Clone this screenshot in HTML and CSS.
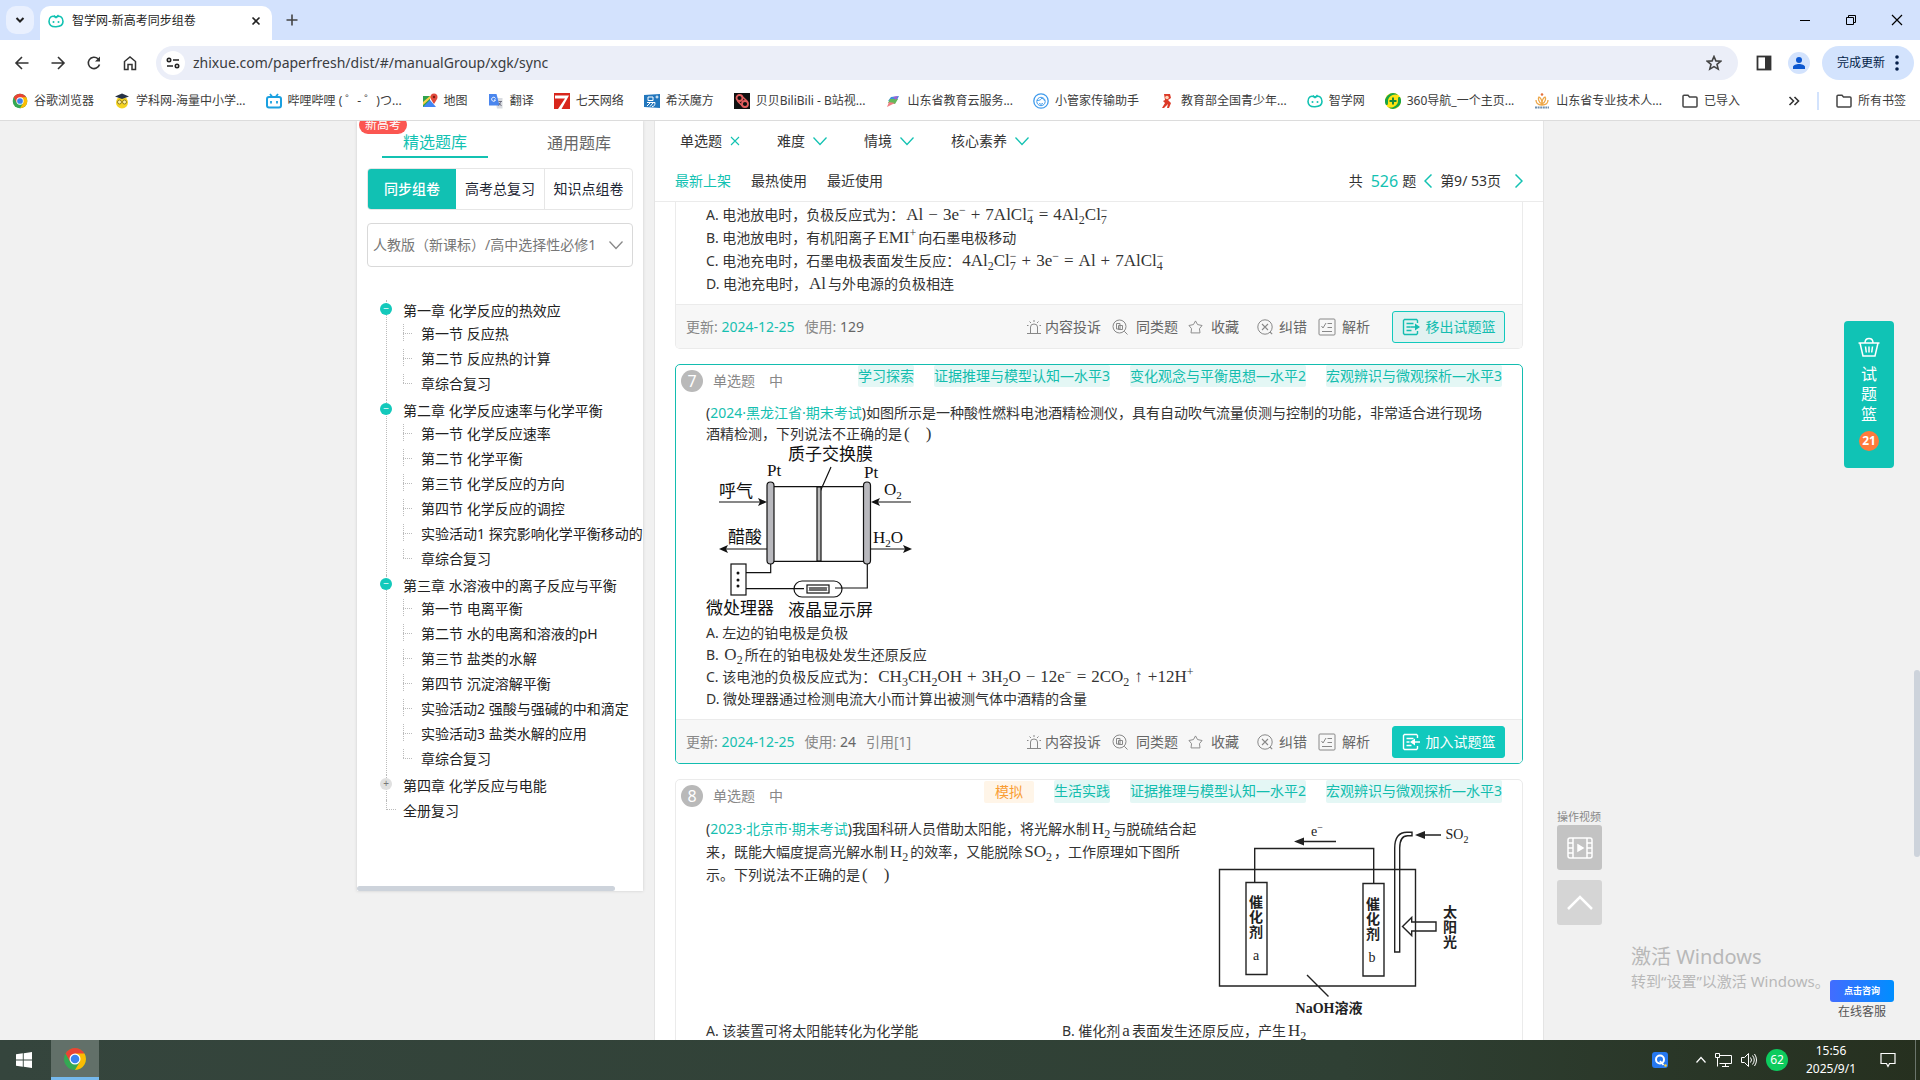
FILE: index.html
```html
<!DOCTYPE html>
<html lang="zh-CN">
<head>
<meta charset="utf-8">
<title>智学网-新高考同步组卷</title>
<link rel="stylesheet" href="styles.css">
</head>
<body>
<svg class="defs" aria-hidden="true">
  <defs>
    <symbol id="owl" viewBox="0 0 16 16"><path d="M8 4.500C4 1.500 .8 4.500 1 8.500S4 14 8 13.800s7-1.300 7-5.300-3-7-7-4z" fill="none" stroke="#13c2b2" stroke-width="1.600"/><path d="M8 4.500 10.500 2M8 4.500 6 2.500" stroke="#13c2b2" stroke-width="1.400"/><circle cx="5.500" cy="9" r="1" fill="#13c2b2"/><circle cx="10.500" cy="9" r="1" fill="#13c2b2"/></symbol>
    <symbol id="chrome" viewBox="0 0 24 24"><circle cx="12" cy="12" r="11" fill="#34a853"/><path d="M12 12 2.500 6.500A11 11 0 0 1 21.500 6.500z" fill="#ea4335"/><path d="M12 6.500h9.500A11 11 0 0 1 12 23l5-8.500z" fill="#fbbc04"/><path d="M2.500 6.500 7.200 14.700 12 6.500z" fill="#ea4335"/><circle cx="12" cy="12" r="5.500" fill="#fff"/><circle cx="12" cy="12" r="4.300" fill="#3b82f0"/></symbol>
    <symbol id="folder" viewBox="0 0 16 16"><path d="M1 3.200c0-.6.400-1 1-1h4L7.500 4H14c.6 0 1 .4 1 1v8c0 .6-.4 1-1 1H2c-.6 0-1-.4-1-1z" fill="none" stroke="#444" stroke-width="1.500"/></symbol>
    <symbol id="down" viewBox="0 0 14 14"><path d="M.5 3.500 7 10.500 13.500 3.500" fill="none" stroke="currentColor" stroke-width="1.300"/></symbol>
    <symbol id="siren" viewBox="0 0 14 16"><path d="M0 14.500h14M3.500 14V8a3.500 3 0 0 1 7 0v6M7 1v2M2.500 2.500 4 4M11.500 2.500 10 4M0 6.500h1.500M12.500 6.500H14" fill="none" stroke="currentColor"/></symbol>
    <symbol id="same" viewBox="0 0 16 16"><circle cx="7.500" cy="7.500" r="6.500" fill="none" stroke="currentColor"/><path d="M12.300 12.300 15.500 15.500M4.500 4.500h3.500v5.500H4.500zM6.500 6.500h4v4h-4z" fill="none" stroke="currentColor"/></symbol>
    <symbol id="star" viewBox="0 0 16 16"><path d="m8 1.500 2.200 3.900 4.800 1-2.800 3.400.6 4.500H3.200l.6-4.500L1 6.400l4.800-1z" fill="none" stroke="currentColor" stroke-linejoin="round"/></symbol>
    <symbol id="wrong" viewBox="0 0 16 16"><circle cx="8" cy="8" r="7.200" fill="none" stroke="currentColor"/><path d="m5 5 6 6M11 5l-6 6M13 13l2.200 2.200" stroke="currentColor" stroke-width="1.100"/></symbol>
    <symbol id="parse" viewBox="0 0 18 18"><rect x="1" y="1" width="16" height="16" rx="1" fill="none" stroke="currentColor"/><path d="m3.500 8 1.500 2 3-5M9.500 5.500H14M9.500 9.500H14M4 13.500h10" fill="none" stroke="currentColor"/></symbol>
    <symbol id="out" viewBox="0 0 18 18"><path d="M15.500 5V2.500l-1-1H2.500l-1 1v13l1 1h12l1-1V13M4.500 5.500h7M4.500 9h4M4.500 12.500h5" fill="none" stroke="currentColor" stroke-width="1.400"/><path d="M8.500 9h8" stroke="currentColor" stroke-width="1.600"/><path d="m13 5.500 5 3.500-5 3.500z" fill="currentColor"/></symbol>
    <symbol id="in" viewBox="0 0 18 18"><path d="M15.500 5V2.500l-1-1H2.500l-1 1v13l1 1h12l1-1V13M4.500 5.500h7M4.500 9h3M4.500 12.500h5" fill="none" stroke="currentColor" stroke-width="1.400"/><path d="M11 9h7" stroke="currentColor" stroke-width="1.600"/><path d="m13 5.500-5 3.500 5 3.500z" fill="currentColor"/></symbol>
  </defs>
</svg>

<header class="browser">
  <div class="tabstrip">
    <button class="tabsearch" aria-label="搜索标签页"><svg width="10" height="8" viewBox="0 0 10 8"><path d="m1.500 2 3.500 3.500L8.500 2" fill="none" stroke="#222" stroke-width="2"/></svg></button>
    <div class="tab"><svg width="16" height="16"><use href="#owl"/></svg><span class="tab-title">智学网-新高考同步组卷</span><button aria-label="关闭"><svg width="10" height="10" viewBox="0 0 10 10"><path d="m1.500 1.500 7 7m0-7-7 7" stroke="#222" stroke-width="1.600"/></svg></button></div>
    <button class="newtab" aria-label="新标签页"><svg width="12" height="12" viewBox="0 0 12 12"><path d="M6 .5v11M.5 6h11" stroke="#444" stroke-width="1.600"/></svg></button>
    <div class="winbtns">
      <button aria-label="最小化"><svg width="12" height="12"><path d="M1 6.500h10" stroke="#000"/></svg></button>
      <button aria-label="还原"><svg width="12" height="12"><path d="M1.500 3.500h7v7h-7zM3.500 3V1.500h7v7H9" fill="none" stroke="#000"/></svg></button>
      <button aria-label="关闭窗口"><svg width="12" height="12"><path d="m1 1 10 10m0-10L1 11" stroke="#000" stroke-width="1.200"/></svg></button>
    </div>
  </div>
  <div class="toolbar">
    <button aria-label="后退"><svg width="16" height="16" viewBox="0 0 16 16"><path d="M14.500 8H2.500M8 2 2 8l6 6" fill="none" stroke="#333" stroke-width="1.600"/></svg></button>
    <button aria-label="前进"><svg width="16" height="16" viewBox="0 0 16 16"><path d="M1.500 8h12M8 2l6 6-6 6" fill="none" stroke="#333" stroke-width="1.600"/></svg></button>
    <button aria-label="刷新"><svg width="16" height="16" viewBox="0 0 16 16"><path d="M13.500 9.500A5.700 5.700 0 1 1 12 3.800l1.500 1.500" fill="none" stroke="#333" stroke-width="1.600"/><path d="M14 1.500v5H9z" fill="#333"/></svg></button>
    <button aria-label="主页"><svg width="16" height="16" viewBox="0 0 16 16"><path d="M2.500 14.500V6.500L8 2l5.500 4.500v8H10v-5H6v5z" fill="none" stroke="#333" stroke-width="1.500"/></svg></button>
    <div class="omnibox">
      <span class="site"><svg width="14" height="14" viewBox="0 0 14 14" fill="none" stroke="#222" stroke-width="1.600"><circle cx="3" cy="4" r="1.700"/><path d="M7 4h6M1 10h6"/><circle cx="11" cy="10" r="1.700"/></svg></span>
      <input type="text" aria-label="地址" value="zhixue.com/paperfresh/dist/#/manualGroup/xgk/sync">
      <button aria-label="收藏此页"><svg width="16" height="16" viewBox="0 0 16 16"><path d="m8 1.500 1.900 4.400 4.800.4-3.700 3.100 1.200 4.700L8 11.600l-4.200 2.500L5 9.400 1.300 6.300l4.800-.4z" fill="none" stroke="#444" stroke-width="1.600"/></svg></button>
    </div>
    <button class="side" aria-label="侧边栏"><svg width="16" height="16" viewBox="0 0 16 16"><rect x="1.500" y="1.500" width="13" height="13" fill="none" stroke="#333" stroke-width="1.800"/><path d="M9 1h6v14H9z" fill="#333"/></svg></button>
    <button class="avatar" aria-label="用户"><svg width="14" height="14" viewBox="0 0 14 14" fill="#0b57d0"><circle cx="7" cy="4" r="3"/><path d="M1 13v-2c0-2 3.500-3 6-3s6 1 6 3v2z"/></svg></button>
    <button class="update">完成更新<svg width="4" height="18" viewBox="0 0 4 18" fill="#041e49"><circle cx="2" cy="3" r="1.800"/><circle cx="2" cy="9" r="1.800"/><circle cx="2" cy="15" r="1.800"/></svg></button>
  </div>
  <nav class="bookmarks">
    <a href="#"><svg width="16" height="16"><use href="#chrome"/></svg>谷歌浏览器</a>
    <a href="#"><svg width="16" height="16" viewBox="0 0 16 16"><circle cx="8" cy="9.500" r="6" fill="#f4d321"/><path d="m1 3.500 7-3 7 3-7 2.500z" fill="#273246"/><circle cx="5.500" cy="9" r="2" fill="#fff2a0" stroke="#7a6412" stroke-width=".8"/><circle cx="10.500" cy="9" r="2" fill="#fff2a0" stroke="#7a6412" stroke-width=".8"/></svg>学科网-海量中小学...</a>
    <a href="#"><svg width="16" height="16" viewBox="0 0 16 16"><rect x="1" y="4" width="14" height="10.500" rx="2" fill="#fff" stroke="#1aa0e0" stroke-width="2"/><path d="m4 1 2 2.500M12 1l-2 2.500M5 8v2.500M11 8v2.500" stroke="#1aa0e0" stroke-width="1.800"/></svg>哔哩哔哩 ( ゜- ゜)つ...</a>
    <a href="#"><svg width="16" height="16" viewBox="0 0 16 16"><path d="M1 3h7v11H1z" fill="#2fa24e"/><path d="m1 14 7-7 6 7z" fill="#4285f4"/><path d="m1 9 7-6h3L1 12z" fill="#fbd04a"/><path d="M12 11C9.500 7 8.500 6 8.500 4a3.500 3.500 0 0 1 7 0c0 2-1 3-3.500 7z" fill="#e04a3d"/><circle cx="12" cy="4" r="1.200" fill="#7c1b12"/></svg>地图</a>
    <a href="#"><svg width="16" height="16" viewBox="0 0 16 16"><path d="M7 5h7.500v10.500H9z" fill="#d8dbe0"/><path d="M1 1h7.500l3 11.500H1z" fill="#4a86ee"/><path d="M7.500 5.500A2 2 0 1 0 7.500 7H6" fill="none" stroke="#fff"/><path d="M10.500 8.500h3.500M12.500 8.500c0 2-1 3-2 4M11 10l2.500 3" stroke="#667" fill="none" stroke-width=".9"/></svg>翻译</a>
    <a href="#"><svg width="16" height="16" viewBox="0 0 16 16"><path d="M0 0h16v16H0z" fill="#d8261c"/><path d="M1 2.500h14L7.500 16H4L11 5.500H1z" fill="#fff"/></svg>七天网络</a>
    <a href="#"><svg width="16" height="16" viewBox="0 0 16 16"><path d="m0 2 16-1v14L0 14z" fill="#2277bd"/><path d="M4 4h5v3.500H4zM3 9.500h8c0 3-1 4-3 4M6 10l-3 3M9 10l-3 3.500M11.500 4h3M13 2.500v3" fill="none" stroke="#fff"/></svg>希沃魔方</a>
    <a href="#"><svg width="16" height="16" viewBox="0 0 16 16"><path d="M0 0h16v16H0z" fill="#111"/><circle cx="5.500" cy="5" r="3" fill="none" stroke="#e35f5f" stroke-width="1.800"/><circle cx="11" cy="11" r="3" fill="none" stroke="#e35f5f" stroke-width="1.800"/><path d="m3.500 8 6 6M7.500 3l5.500 5" stroke="#e35f5f" stroke-width="1.500"/></svg>贝贝BiliBili - B站视...</a>
    <a href="#"><svg width="16" height="16" viewBox="0 0 16 16"><path d="M3 8 6 4l8-1-2 4z" fill="#3f8fdc"/><path d="m3 10 2-4 8 0-3 5z" fill="#64b85a"/><path d="m2 14 2-5 6 1-4 2z" fill="#ef7f83"/><path d="m8 4 5-1-2 4z" fill="#a45ed0"/></svg>山东省教育云服务...</a>
    <a href="#"><svg width="16" height="16" viewBox="0 0 16 16" fill="none" stroke="#409bec"><circle cx="8" cy="8" r="7.200" stroke-width="1.300"/><circle cx="8" cy="8.500" r="4.200"/><path d="M4 7.500c3 0 4-1 5-2.500 1 1.500 2 2 3 2.500M6 10.500q2 1.500 4 0"/></svg>小管家传输助手</a>
    <a href="#"><svg width="16" height="16" viewBox="0 0 16 16"><path d="M5 1h6l1 4-3 2 3 3-2 5H8l1-4-4 4H3l3-5-2-2 2-1z" fill="#dc3a28"/><circle cx="8" cy="4.500" r="1.800" fill="#ffd5ba"/></svg>教育部全国青少年...</a>
    <a href="#"><svg width="16" height="16"><use href="#owl"/></svg>智学网</a>
    <a href="#"><svg width="16" height="16" viewBox="0 0 16 16"><circle cx="8" cy="8" r="8" fill="#ffe411"/><path d="M1 12A8 8 0 0 1 13 2C8 0 3 4 3 8s0 4-2 4M15 4A8 8 0 0 1 3 14c5 2 10-2 10-6s0-4 2-4" fill="#18a447"/><path d="M8 4.500v7M4.500 8h7" stroke="#168b3a" stroke-width="2"/></svg>360导航_一个主页...</a>
    <a href="#"><svg width="16" height="16" viewBox="0 0 16 16"><circle cx="8" cy="1.500" r="1.300" fill="#e4723c"/><path d="M8 11C4 9 4 5 5 4c2 1 3 3 3 7zc4-2 4-6 3-7-2 1-3 3-3 7zM8 12C3 12 2 9 2 7M8 12c5 0 6-3 6-5" fill="none" stroke="#eda748" stroke-width="1.300"/><path d="M1 14.500h14" stroke="#6f8fae" stroke-width="2" stroke-dasharray="2 .6"/></svg>山东省专业技术人...</a>
    <a href="#"><svg width="16" height="16"><use href="#folder"/></svg>已导入</a>
    <span class="bm-end"><button aria-label="更多书签"><svg width="12" height="12" viewBox="0 0 12 12"><path d="m1.500 2 4 4-4 4M6.500 2l4 4-4 4" fill="none" stroke="#333" stroke-width="1.600"/></svg></button><i></i><a href="#"><svg width="16" height="16"><use href="#folder"/></svg>所有书签</a></span>
  </nav>
</header>

<div class="page">
  <div class="wrap">
    <aside class="panel">
      <span class="newbadge">新高考</span>
      <div class="banks"><button class="on">精选题库</button><button>通用题库</button></div>
      <div class="modes"><button class="on">同步组卷</button><button>高考总复习</button><button>知识点组卷</button></div>
      <div class="book"><select aria-label="教材版本"><option>人教版（新课标）/高中选择性必修1</option></select><svg width="14" height="14"><use href="#down"/></svg></div>
      <ul class="tree">
        <li class="open"><a href="#">第一章 化学反应的热效应</a>
          <ul><li><a href="#">第一节 反应热</a></li><li><a href="#">第二节 反应热的计算</a></li><li><a href="#">章综合复习</a></li></ul></li>
        <li class="open"><a href="#">第二章 化学反应速率与化学平衡</a>
          <ul><li><a href="#">第一节 化学反应速率</a></li><li><a href="#">第二节 化学平衡</a></li><li><a href="#">第三节 化学反应的方向</a></li><li><a href="#">第四节 化学反应的调控</a></li><li><a href="#">实验活动1 探究影响化学平衡移动的</a></li><li><a href="#">章综合复习</a></li></ul></li>
        <li class="open"><a href="#">第三章 水溶液中的离子反应与平衡</a>
          <ul><li><a href="#">第一节 电离平衡</a></li><li><a href="#">第二节 水的电离和溶液的pH</a></li><li><a href="#">第三节 盐类的水解</a></li><li><a href="#">第四节 沉淀溶解平衡</a></li><li><a href="#">实验活动2 强酸与强碱的中和滴定</a></li><li><a href="#">实验活动3 盐类水解的应用</a></li><li><a href="#">章综合复习</a></li></ul></li>
        <li class="shut"><a href="#">第四章 化学反应与电能</a></li>
        <li class="leaf"><a href="#">全册复习</a></li>
      </ul>
      <span class="hbar"></span>
    </aside>

    <main class="main">
      <div class="head">
        <div class="filters">
          <button>单选题<svg class="x" width="10" height="10"><path d="m1 1 8 8m0-8-8 8" stroke="currentColor" stroke-width="1.100"/></svg></button>
          <button>难度<svg width="14" height="14"><use href="#down"/></svg></button>
          <button>情境<svg width="14" height="14"><use href="#down"/></svg></button>
          <button>核心素养<svg width="14" height="14"><use href="#down"/></svg></button>
        </div>
        <div class="sort">
          <button class="on">最新上架</button><button>最热使用</button><button>最近使用</button>
          <div class="pager"><span>共</span><b>526</b><span>题</span><button aria-label="上一页"><svg width="8" height="14"><path d="M7.500.5 1 7l6.500 6.500" fill="none" stroke="currentColor" stroke-width="1.500"/></svg></button><span class="pg">第9/ 53页</span><button aria-label="下一页"><svg width="8" height="14"><path d="M.5.500 7 7 .5 13.500" fill="none" stroke="currentColor" stroke-width="1.500"/></svg></button></div>
        </div>
      </div>

      <div class="list">
        <article class="card first">
          <div class="body">
            <ol class="opts roomy">
              <li>A. 电池放电时，负极反应式为：<span class="m">Al<i>−</i>3e<sup>−</sup><i>+</i>7AlCl<span class="ss"><span>−</span><span>4</span></span><i>=</i>4Al<sub>2</sub>Cl<span class="ss"><span>−</span><span>7</span></span></span></li>
              <li>B. 电池放电时，有机阳离子<span class="m">EMI<sup>+</sup></span>向石墨电极移动</li>
              <li>C. 电池充电时，石墨电极表面发生反应：<span class="m">4Al<sub>2</sub>Cl<span class="ss"><span>−</span><span>7</span></span><i>+</i>3e<sup>−</sup><i>=</i>Al<i>+</i>7AlCl<span class="ss"><span>−</span><span>4</span></span></span></li>
              <li>D. 电池充电时，<span class="m">Al</span>与外电源的负极相连</li>
            </ol>
          </div>
          <footer>
            <span>更新: <em>2024-12-25</em></span><span>使用: <b>129</b></span>
            <div class="acts">
              <button class="tight"><svg width="14" height="16"><use href="#siren"/></svg>内容投诉</button><button><svg width="16" height="16"><use href="#same"/></svg>同类题</button><button><svg width="15" height="16"><use href="#star"/></svg>收藏</button><button class="snug"><svg width="16" height="16"><use href="#wrong"/></svg>纠错</button><button class="snug"><svg width="18" height="18"><use href="#parse"/></svg>解析</button><button class="cta ghost"><svg width="18" height="18"><use href="#out"/></svg>移出试题篮</button>
            </div>
          </footer>
        </article>

        <article class="card active">
          <header><span class="num">7</span><span>单选题</span><span>中</span><div class="tags"><span>学习探索</span><span>证据推理与模型认知—水平3</span><span>变化观念与平衡思想—水平2</span><span>宏观辨识与微观探析—水平3</span></div></header>
          <div class="body">
            <p>(<em>2024·黑龙江省·期末考试</em>)如图所示是一种酸性燃料电池酒精检测仪，具有自动吹气流量侦测与控制的功能，非常适合进行现场酒精检测，下列说法不正确的是<span class="m">(<i class="blank"></i>)</span></p>
            <svg class="fig" width="208" height="178" viewBox="0 0 208 178" fill="none" stroke="#111" stroke-width="1.200">
              <g fill="#111" stroke="none" font-size="17">
                <text x="82" y="16">质子交换膜</text><text x="61" y="32">Pt</text><text x="158" y="34">Pt</text><text x="13" y="53">呼气</text><text x="178" y="51">O<tspan font-size="11" dy="4">2</tspan></text><text x="22" y="99">醋酸</text><text x="167" y="99">H<tspan font-size="11" dy="4">2</tspan><tspan dy="-4">O</tspan></text><text x="0" y="170">微处理器</text><text x="82" y="172">液晶显示屏</text>
                <path d="m61 58-9-4 2 4-2 4zM165 58l9-4-2 4 2 4zM13 105l9-4-2 4 2 4zM206 105l-9-4 2 4-2 4z"/>
                <circle cx="32" cy="129" r="1.500"/><circle cx="32" cy="136" r="1.500"/><circle cx="32" cy="142" r="1.500"/>
              </g>
              <path d="M13 58h42M172 58h33M20 105h41M165 105h34M68 42.700h90M68 117.300h90M125 23l-11.500 26M64.700 120v8.700H40M40 144.700h58M129 144h32.300V120"/>
              <rect x="111" y="43" width="4" height="74" fill="#bbb"/>
              <rect x="61" y="38" width="7" height="82" rx="3.500" fill="#b9b9be"/><rect x="157.500" y="38" width="7" height="82" rx="3.500" fill="#b9b9be"/>
              <rect x="25" y="120" width="15" height="31"/><rect x="88" y="137" width="48" height="16" rx="8"/><rect x="101" y="141" width="22" height="8"/>
              <path d="m103 147 2-4 2 4 2-4 2 4 2-4 2 4 2-4 2 4 2-4M103 143l2 4 2-4 2 4 2-4 2 4 2-4 2 4 2-4 2 4" stroke-width=".7"/>
            </svg>
            <ol class="opts">
              <li>A. 左边的铂电极是负极</li>
              <li>B. <span class="m">O<sub>2</sub></span>所在的铂电极处发生还原反应</li>
              <li>C. 该电池的负极反应式为：<span class="m">CH<sub>3</sub>CH<sub>2</sub>OH<i>+</i>3H<sub>2</sub>O<i>−</i>12e<sup>−</sup><i>=</i>2CO<sub>2</sub><i>↑</i>+12H<sup>+</sup></span></li>
              <li>D. 微处理器通过检测电流大小而计算出被测气体中酒精的含量</li>
            </ol>
          </div>
          <footer>
            <span>更新: <em>2024-12-25</em></span><span>使用: <b>24</b></span><span>引用[1]</span>
            <div class="acts">
              <button class="tight"><svg width="14" height="16"><use href="#siren"/></svg>内容投诉</button><button><svg width="16" height="16"><use href="#same"/></svg>同类题</button><button><svg width="15" height="16"><use href="#star"/></svg>收藏</button><button class="snug"><svg width="16" height="16"><use href="#wrong"/></svg>纠错</button><button class="snug"><svg width="18" height="18"><use href="#parse"/></svg>解析</button><button class="cta"><svg width="18" height="18"><use href="#in"/></svg>加入试题篮</button>
            </div>
          </footer>
        </article>

        <article class="card">
          <header><span class="num">8</span><span>单选题</span><span>中</span><div class="tags"><span class="mock">模拟</span><span>生活实践</span><span>证据推理与模型认知—水平2</span><span>宏观辨识与微观探析—水平3</span></div></header>
          <div class="body">
            <div class="split">
              <p>(<em>2023·北京市·期末考试</em>)我国科研人员借助太阳能，将光解水制<span class="m">H<sub>2</sub></span>与脱硫结合起来，既能大幅度提高光解水制<span class="m">H<sub>2</sub></span>的效率，又能脱除<span class="m">SO<sub>2</sub></span>，工作原理如下图所示。下列说法不正确的是<span class="m">(<i class="blank"></i>)</span></p>
              <svg class="fig" width="260" height="200" viewBox="0 0 260 200" fill="none" stroke="#222" stroke-width="1.400">
                <g fill="#222" stroke="none" font-size="14" font-weight="700" text-anchor="middle">
                  <text x="44" y="87">催</text><text x="44" y="102">化</text><text x="44" y="117">剂</text><text x="44" y="140" font-weight="400">a</text>
                  <text x="161" y="89">催</text><text x="161" y="104">化</text><text x="161" y="119">剂</text><text x="160" y="142" font-weight="400">b</text>
                  <text x="238" y="97">太</text><text x="238" y="112">阳</text><text x="238" y="127">光</text>
                  <text x="117" y="193">NaOH溶液</text><text x="105" y="16" font-weight="400">e<tspan font-size="10" dy="-5">−</tspan></text><text x="245" y="19" font-weight="400">SO<tspan font-size="10" dy="4">2</tspan></text>
                  <path d="m82 21.500 10-4v8zM203 15l10-4v8z"/>
                </g>
                <path d="M7.500 49.500h196v116.500H7.500zM34 62.500h21v92H34zM151 63.500h21v92.500h-21zM42.700 62V28.500h119V63M124 21.500H90M229 15h-18M95 155l21.500 21.500"/>
                <path d="M200 12.300h-5q-12.300 0-12.300 16V132h5V28q0-12.300 8-12.300h4.300zM190.500 106.500l9.200-9v4.500H224v9h-24.300v4.500z"/>
              </svg>
            </div>
            <ol class="opts two"><li>A. 该装置可将太阳能转化为化学能</li><li>B. 催化剂<span class="m">a</span>表面发生还原反应，产生<span class="m">H<sub>2</sub></span></li></ol>
          </div>
        </article>
      </div>
    </main>
  </div>

  <button class="basket"><svg width="22" height="20" viewBox="0 0 22 20" fill="none" stroke="#fff" stroke-width="1.500"><path d="M.5 6h21M2 6l3 13h12l3-13M7 6c0-6 8-6 8 0M7.500 9.500l.8 6M11 9.500v6M14.500 9.500l-.8 6"/></svg><span>试<br>题<br>篮</span><b>21</b></button>
  <div class="helpers">
    <span>操作视频</span>
    <button aria-label="操作视频"><svg width="26" height="22" viewBox="0 0 26 22" fill="none" stroke="#fff" stroke-width="1.500"><rect x="1" y="1" width="24" height="20" rx="2"/><path d="M6 1v20M20 1v20M1 6h5M1 11h5M1 16h5M20 6h5M20 11h5M20 16h5"/><path d="m11 8 5 3-5 3z" fill="#fff"/></svg></button>
    <button class="top" aria-label="回到顶部"><svg width="26" height="16" viewBox="0 0 26 16"><path d="M1 14 13 2l12 12" fill="none" stroke="#fff" stroke-width="2.500"/></svg></button>
  </div>
  <div class="watermark"><strong>激活 Windows</strong><span>转到“设置”以激活 Windows。</span></div>
  <div class="service"><button>点击咨询</button><span>在线客服</span></div>
  <span class="vbar"></span>
</div>

<footer class="taskbar">
  <button class="start" aria-label="开始"><svg width="16" height="16" fill="#fff"><path d="M0 2.300 6.800 1.300v6.200H0zM7.700 1.200 16 0v7.500H7.700zM0 8.400h6.800v6.300L0 13.700zM7.700 8.400H16V16l-8.300-1.200z"/></svg></button>
  <button class="app" aria-label="Chrome"><svg width="24" height="24"><use href="#chrome"/></svg></button>
  <div class="tray">
    <svg class="q" width="16" height="16" viewBox="0 0 16 16"><rect width="16" height="16" rx="3" fill="#2678f0"/><circle cx="8" cy="7.500" r="4" fill="none" stroke="#fff" stroke-width="2"/><path d="m8 9 3.500 4" stroke="#fff" stroke-width="1.800"/><circle cx="13.500" cy="13.500" r="1.300" fill="#ffd23c"/></svg>
    <svg width="10" height="8"><path d="m.5 6.500 4.500-5 4.500 5" fill="none" stroke="#fff" stroke-width="1.200"/></svg>
    <svg width="17" height="16" fill="none" stroke="#fff"><path d="M4.500 3.500h12v8h-12M10.500 11.500v3M7 14.500h7M.5 1.500h4v4h-4zM2.500 5.500v9"/></svg>
    <svg width="16" height="16" fill="none" stroke="#fff"><path d="M.5 5.500h3l4-4v13l-4-4h-3zM9.500 5.500q2 2.500 0 5M11.500 3.500q3.500 4.500 0 9M13.500 2q4 6 0 12"/></svg>
    <span class="score">62</span>
    <div class="clock"><span>15:56</span><span>2025/9/1</span></div>
    <svg class="note" width="16" height="16" fill="none" stroke="#fff" stroke-width="1.200"><path d="M1 1.500h14v10H9.500L8 14.500 6.500 11.500H1z"/></svg>
    <i></i>
  </div>
</footer>
</body>
</html>
```

FILE: styles.css
```css
* { box-sizing: border-box; }
body {
  margin: 0; height: 100vh; display: flex; flex-direction: column; overflow: hidden;
  font: 14px/22px "Noto Sans", "Noto Sans CJK SC", sans-serif; color: #333; background: #f1f1f1;
}
button { font: inherit; color: inherit; border: 0; padding: 0; background: none; display: inline-flex; align-items: center; justify-content: center; white-space: nowrap; }
a { color: inherit; text-decoration: none; white-space: nowrap; }
ul, ol { list-style: none; margin: 0; padding: 0; }
p { margin: 0; line-height: 21px; }
em, b, i { font-style: normal; font-weight: 400; }
svg { flex: none; display: block; }
.defs { position: absolute; width: 0; height: 0; }

/* browser chrome */
.browser { flex: none; background: #fff; border-bottom: 1px solid #dcdcdc; font-size: 12px; }
.tabstrip { height: 40px; background: #d3e2fd; display: flex; align-items: flex-end; padding-left: 6px; }
.tabsearch { width: 28px; height: 28px; border-radius: 10px; background: #e9f0fe; align-self: center; margin: 0 6px 0 0; }
.tab { width: 232px; height: 34px; background: #fff; border-radius: 10px 10px 0 0; display: flex; align-items: center; gap: 8px; padding: 0 11px 4px 8px; color: #1f1f1f; }
.tab-title { flex: 1; }
.newtab { width: 40px; height: 40px; }
.winbtns { margin-left: auto; align-self: stretch; display: flex; }
.winbtns button { width: 46px; }
.toolbar { height: 46px; display: flex; align-items: center; padding: 0 6px 0 4px; }
.toolbar > button { width: 36px; }
.omnibox { flex: 1; height: 34px; border-radius: 17px; background: #ebeef8; display: flex; align-items: center; padding: 0 16px 0 5px; margin: 0 8px; }
.site { width: 24px; height: 24px; border-radius: 50%; background: #fff; display: flex; align-items: center; justify-content: center; }
.omnibox input { flex: 1; border: 0; background: none; outline: 0; font: inherit; font-size: 14px; color: #3a3c40; padding: 0 8px; }
.toolbar > .avatar { width: 22px; height: 22px; border-radius: 50%; background: #d3e3fd; margin: 0 12px 0 6px; }
.toolbar > .update { width: 92px; height: 34px; border-radius: 17px; background: #d3e3fd; color: #041e49; gap: 10px; }
.bookmarks { height: 34px; display: flex; align-items: center; gap: 20px; padding: 0 14px 4px 12px; color: #3c3c3c; }
.bookmarks a { display: flex; align-items: center; gap: 6px; height: 20px; }
.bm-end { margin-left: auto; display: flex; align-items: center; gap: 17px; }
.bm-end i { width: 2px; height: 18px; background: #d3e3fd; }

/* page */
.page { flex: 1; min-height: 0; position: relative; overflow: hidden; padding-right: 19px; }
.wrap { width: 1187px; height: 100%; margin: 0 auto; display: flex; gap: 11px; align-items: flex-start; }
.panel { width: 286px; background: #fff; box-shadow: 0 0 3px #ccc; position: relative; padding: 7px 10px 66px; overflow: hidden; }
.newbadge { position: absolute; left: 2px; top: -5px; width: 48px; height: 18px; border-radius: 9px; background: #fb5651; color: #fff; font-size: 12px; line-height: 18px; text-align: center; }
.banks { display: flex; justify-content: space-between; font-size: 16px; color: #666; padding: 0 1px 0 15px; }
.banks button { width: 106px; height: 30px; }
.banks .on { color: #13c2b2; border-bottom: 2px solid #13c2b2; }
.modes { display: grid; grid-template-columns: 88px 1fr 88px; height: 42px; margin-top: 10px; border: 1px solid #e6e6e6; border-radius: 4px; overflow: hidden; color: #1c2534; }
.modes button + button + button { border-left: 1px solid #e6e6e6; }
.modes .on { background: #11c1b3; color: #fff; font-weight: 500; }
.book { position: relative; display: grid; margin-top: 13px; color: #888; }
.book select { grid-area: 1 / 1; appearance: none; width: 100%; height: 44px; padding: 0 34px 0 5px; border: 1px solid #d9d9d9; border-radius: 4px; background: #fff; font: inherit; color: #777; }
.book svg { grid-area: 1 / 1; align-self: center; justify-self: end; margin-right: 10px; }
.tree { margin: 33px -10px 0 23px; padding-left: 13px; color: #222; }
.tree > li { position: relative; height: 25px; line-height: 21px; }
.tree > .open { height: auto; padding-bottom: 4px; }
.tree > li > a { display: block; }
.tree > li::before { content: ""; position: absolute; left: -17px; top: 0; bottom: 0; border-left: 1px dotted #bbb; }
.tree > .leaf::before { width: 9px; bottom: 15px; border-bottom: 1px dotted #bbb; }
.tree > .open > a::before, .tree > .shut > a::before { position: absolute; left: -23px; top: 3px; width: 12px; height: 12px; border-radius: 50%; background: #13c9bb; color: #fff; content: "−"; font-size: 10px; line-height: 11px; text-align: center; }
.tree > .shut > a::before { content: "+"; background: #e0e0e0; color: #777; }
.tree ul a { display: block; line-height: 25px; padding-left: 18px; position: relative; }
.tree ul a::before, .tree ul a::after { content: ""; position: absolute; left: 0; top: 3px; height: 17px; border-left: 1px dotted #bbb; }
.tree ul a::after { top: 3px; width: 9px; height: 9px; border: 0; border-bottom: 1px dotted #bbb; }
.tree ul li:last-child a::before { height: 9px; }
.hbar { position: absolute; left: 0; bottom: 0; width: 258px; height: 5px; border-radius: 3px; background: #cdd3db; }

.main { flex: 1; min-width: 0; height: 100%; background: #fff; border: solid #e4e4e4; border-width: 0 1px; }
.head { border-bottom: 1px solid #ebebeb; height: 81px; padding: 9px 20px 0; }
.filters { display: flex; gap: 37px; height: 22px; padding-left: 5px; }
.filters button { gap: 8px; }
.filters svg, .pager button { color: #13c2b2; }
.sort { display: flex; gap: 20px; height: 22px; margin-top: 18px; }
.sort .on { color: #13c2b2; }
.pager { margin-left: auto; display: flex; align-items: center; gap: 8px; }
.pager b { font-size: 16px; color: #13c2b2; margin-right: -4px; }
.pg { margin-right: 6px; }
.list { padding: 0 20px; display: flex; flex-direction: column; gap: 15px; }
.card { border: 1px solid #ebebeb; border-radius: 5px; overflow: hidden; }
.card.first { border-top: 0; border-radius: 0 0 5px 5px; }
.card.active { border-color: #13bdb0; }
.card header { height: 37px; display: flex; align-items: flex-start; gap: 10px; padding: 5px 20px 0 5px; color: #888; }
.card header > span + span + span { margin-left: 4px; }
.num { width: 22px; height: 22px; border-radius: 50%; background: #b9b9b9; color: #fff; font-size: 16px; text-align: center; }
.tags { margin: -5px 0 0 auto; display: flex; gap: 20px; color: #13bdae; }
.tags span { background: #e4f7f5; border-radius: 2px; }
.tags .mock { background: #fff5e8; color: #f99d33; padding: 0 11px; margin-top: 1px; }
.body { padding: 0 30px 9px; }
.first .body { padding-top: 1px; }
em { color: #16bfb0; }
.fig { font-family: "Liberation Serif", "Noto Sans CJK SC", serif; }
.opts li { height: 22px; white-space: nowrap; }
.roomy li { height: 23px; line-height: 23px; }
.two { display: grid; grid-template-columns: 356px 1fr; }
.split { display: flex; justify-content: space-between; height: 203px; }
.split p { width: 498px; line-height: 23px; }
.split .fig { margin: 3px 20px 0 0; }
.m { font: 17px/20px "Liberation Serif", serif; margin: 0 2px; white-space: nowrap; }
.m i { margin: 0 5px; }
.m .blank { margin: 0 8px; }
.m sup, .m sub { font-size: 12px; line-height: 0; }
.m sup { vertical-align: 6px; }
.m sub { vertical-align: -4px; }
.ss { display: inline-flex; flex-direction: column; vertical-align: 6px; font-size: 12px; line-height: 10px; height: 14px; }
.card footer { height: 44px; border-top: 1px solid #ebebeb; background: #f7f7f7; display: flex; align-items: center; gap: 10px; padding: 0 17px 0 10px; color: #888; }
.card footer b { color: #666; }
.acts { margin-left: auto; display: grid; grid-template-columns: 85px 76px 69px 61px 74px 113px; color: #666; }
.acts button { justify-content: flex-start; gap: 8px; }
.acts .tight { gap: 4px; }
.acts .snug { gap: 6px; }
.acts svg { color: #888; }
.acts .cta { height: 32px; justify-content: center; border: 1px solid #11c9bd; border-radius: 3px; background: #11c9bd; color: #fff; gap: 6px; }
.acts .ghost { background: #e1f2f1; color: #13bdb0; }
.acts .cta svg { color: inherit; }

/* floating tools */
.basket { position: absolute; right: 26px; top: 200px; width: 50px; height: 147px; border-radius: 4px; background: #10c3b5; color: #fff; flex-direction: column; gap: 7px; padding-bottom: 2px; font-size: 16px; line-height: 20px; }
.basket b { width: 20px; height: 20px; border-radius: 50%; background: #ff7a3c; font-size: 12px; font-weight: 700; line-height: 20px; }
.helpers { position: absolute; left: 1557px; bottom: 115px; width: 45px; display: flex; flex-direction: column; gap: 10px; font-size: 11px; line-height: 16px; color: #888; white-space: nowrap; }
.helpers span { margin-bottom: -10px; }
.helpers button { height: 45px; border-radius: 3px; background: #c3c3c3; }
.helpers .top { background: #d5d5d5; }
.watermark { position: absolute; right: 93px; bottom: 49px; width: 196px; display: grid; color: #b8b8b8; font-size: 15px; line-height: 20px; white-space: nowrap; }
.watermark strong { font-size: 20px; font-weight: 400; line-height: 28px; }
.service { position: absolute; right: 26px; bottom: 18px; width: 64px; display: grid; font-size: 12px; line-height: 20px; color: #555; text-align: center; }
.service button { height: 22px; border-radius: 3px; background: linear-gradient(90deg, #426cff, #008eff); color: #fff; font-size: 9px; font-weight: 700; }
.vbar { position: absolute; right: 0; top: 549px; width: 6px; height: 187px; border-radius: 3px; background: #cdd3db; }

/* taskbar */
.taskbar { flex: none; height: 40px; display: flex; background: linear-gradient(90deg, #35453d, #2f4034 70%, #26301f); color: #fff; font-size: 12px; line-height: 18px; }
.start { width: 48px; }
.app { width: 48px; margin-left: 3px; background: #627069; border-bottom: 3px solid #76b9ed; }
.tray { margin-left: auto; display: flex; align-items: center; padding-right: 4px; gap: 9px; }
.q { margin-right: 19px; }
.score { width: 22px; height: 22px; border-radius: 50%; background: #0dcb5e; line-height: 22px; text-align: center; }
.clock { width: 68px; display: grid; text-align: center; }
.note { margin: 0 10px 0 6px; }
.tray i { width: 1px; height: 40px; background: #6b756c; }
```
